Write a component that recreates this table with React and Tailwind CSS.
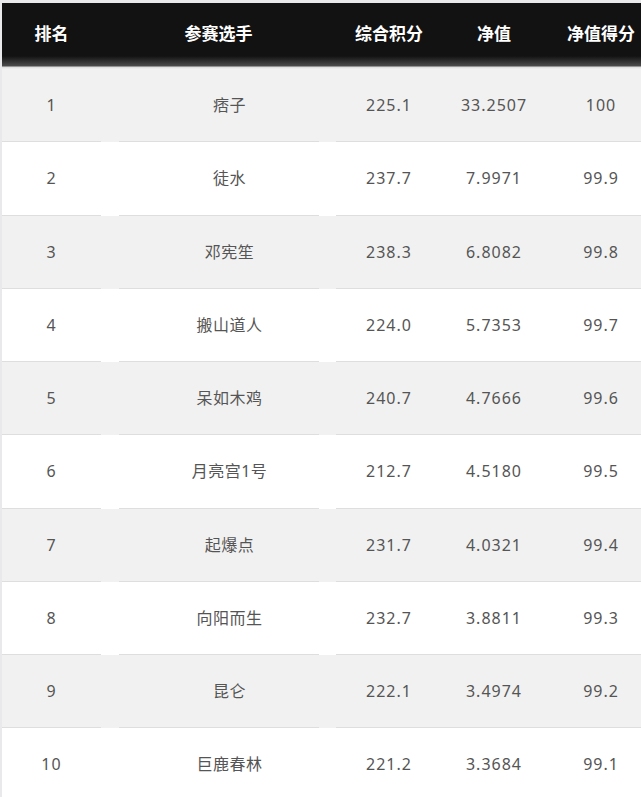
import React from 'react';

const rows = [
  ['1', '痞子', '225.1', '33.2507', '100'],
  ['2', '徒水', '237.7', '7.9971', '99.9'],
  ['3', '邓宪笙', '238.3', '6.8082', '99.8'],
  ['4', '搬山道人', '224.0', '5.7353', '99.7'],
  ['5', '呆如木鸡', '240.7', '4.7666', '99.6'],
  ['6', '月亮宫1号', '212.7', '4.5180', '99.5'],
  ['7', '起爆点', '231.7', '4.0321', '99.4'],
  ['8', '向阳而生', '232.7', '3.8811', '99.3'],
  ['9', '昆仑', '222.1', '3.4974', '99.2'],
  ['10', '巨鹿春林', '221.2', '3.3684', '99.1'],
];

const headers = ['排名', '参赛选手', '综合积分', '净值', '净值得分'];
const widths = ['w-[99px]', 'w-[235px]', 'w-[106px]', 'w-[104px]', 'w-[110px]'];

export default function App() {
  return (
    <div
      className="w-[641px] h-[797px] overflow-hidden bg-[#e9e9ec] pt-[3px] pl-[2px]"
      style={{ fontFamily: '"Noto Sans", "Noto Sans CJK SC", sans-serif' }}
    >
      <div className="w-[654px] bg-white">
        {/* header */}
        <div className="flex h-[66px] items-center bg-[linear-gradient(to_bottom,#121212_0px,#121212_53px,#4c4c4c_63px,#dcdcdc_64px,#f1f1f1_66px)] pb-[4px]">
          {headers.map((h, i) => (
            <div key={h} className={`${widths[i]} shrink-0 text-center text-[17px] font-bold text-white`}>
              {h}
            </div>
          ))}
        </div>

        {rows.map((r, idx) => (
          <div key={r[0]} className={idx % 2 === 0 ? 'bg-[#f1f1f1]' : 'bg-white'}>
            <div className="flex h-[72.25px] items-center">
              {r.map((c, i) => (
                <div
                  key={i}
                  className={`${widths[i]} shrink-0 text-center text-[16px] text-[#555] ${
                    i === 1 ? 'pl-[22px] tracking-[0.5px]' : 'tracking-[1px]'
                  }`}
                >
                  {c}
                </div>
              ))}
            </div>
            <div className="flex h-px">
              <div className="w-[99px] bg-[#dedede]" />
              <div className="w-[18px]" />
              <div className="w-[200px] bg-[#dedede]" />
              <div className="w-[17px]" />
              <div className="flex-1 bg-[#dedede]" />
            </div>
          </div>
        ))}
      </div>
    </div>
  );
}
